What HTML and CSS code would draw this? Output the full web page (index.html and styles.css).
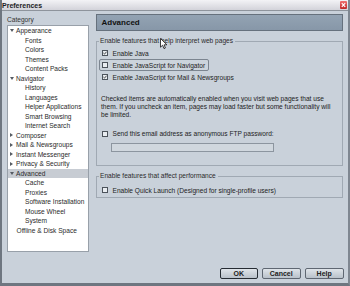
FILE: index.html
```html
<!DOCTYPE html>
<html>
<head>
<meta charset="utf-8">
<link rel="stylesheet" href="styles.css">
</head>
<body>
<div class="window">
  <div class="titlebar">
    <span class="title">Preferences</span>
    <span class="close"><svg width="7" height="8" viewBox="0 0 7 8"><path d="M1.8 2.2 L5.2 5.8 M5.2 2.2 L1.8 5.8" stroke="#fff" stroke-width="1.2" fill="none"/></svg></span>
  </div>
  <div class="main">
    <div class="sidebar">
      <div class="cat-label">Category</div>
      <ul class="tree">
        <li class="node"><span class="twisty open"></span>Appearance</li>
        <li class="child">Fonts</li>
        <li class="child">Colors</li>
        <li class="child">Themes</li>
        <li class="child">Content Packs</li>
        <li class="node"><span class="twisty open"></span>Navigator</li>
        <li class="child">History</li>
        <li class="child">Languages</li>
        <li class="child">Helper Applications</li>
        <li class="child">Smart Browsing</li>
        <li class="child">Internet Search</li>
        <li class="node"><span class="twisty closed"></span>Composer</li>
        <li class="node"><span class="twisty closed"></span>Mail &amp; Newsgroups</li>
        <li class="node"><span class="twisty closed"></span>Instant Messenger</li>
        <li class="node"><span class="twisty closed"></span>Privacy &amp; Security</li>
        <li class="node selected"><span class="twisty open"></span>Advanced</li>
        <li class="child">Cache</li>
        <li class="child">Proxies</li>
        <li class="child">Software Installation</li>
        <li class="child">Mouse Wheel</li>
        <li class="child">System</li>
        <li class="leaf">Offline &amp; Disk Space</li>
      </ul>
    </div>
    <div class="content">
      <div class="panel-header">Advanced</div>
      <fieldset class="group">
        <legend>Enable features that help interpret web pages</legend>
        <div class="row"><span class="check"><span class="box"><svg width="4" height="4" viewBox="0 0 4 4"><path d="M0.4 2 L1.5 3.1 L3.6 0.7" stroke="#333" stroke-width="0.9" fill="none"/></svg></span>Enable Java</span></div>
        <div class="row"><span class="check focused"><span class="box"></span>Enable JavaScript for Navigator</span></div>
        <div class="row"><span class="check"><span class="box"><svg width="4" height="4" viewBox="0 0 4 4"><path d="M0.4 2 L1.5 3.1 L3.6 0.7" stroke="#333" stroke-width="0.9" fill="none"/></svg></span>Enable JavaScript for Mail &amp; Newsgroups</span></div>
        <p class="note">Checked items are automatically enabled when you visit web pages that use them. If you uncheck an item, pages may load faster but some functionality will be limited.</p>
        <div class="row ftp"><span class="check"><span class="box"></span>Send this email address as anonymous FTP password:</span></div>
        <div class="textbox"></div>
      </fieldset>
      <fieldset class="group group2">
        <legend>Enable features that affect performance</legend>
        <div class="row"><span class="check"><span class="box"></span>Enable Quick Launch (Designed for single-profile users)</span></div>
      </fieldset>
    </div>
  </div>
  <div class="footer">
    <button class="btn default">OK</button>
    <button class="btn">Cancel</button>
    <button class="btn">Help</button>
  </div>
  <svg class="cursor" width="8" height="12" viewBox="0 0 8 12"><path d="M0.5 0.5 L0.5 9.2 L2.6 7.2 L4 10.6 L5.4 10 L4.1 6.8 L6.9 6.8 Z" fill="#fff" stroke="#111" stroke-width="0.8"/></svg>
</div>
</body>
</html>
```

FILE: styles.css
```css
* { box-sizing: border-box; }
html, body { margin: 0; padding: 0; }
body {
  width: 350px;
  height: 286px;
  overflow: hidden;
  font-family: "Liberation Sans", Arial, sans-serif;
  font-size: 6.6px;
  color: #222;
  background: #c9d1da;
}
.window {
  position: relative;
  height: 286px;
  display: flex;
  flex-direction: column;
  background: #c9d1da;
  border-left: 2px solid #6e7680;
  border-right: 2px solid #7f8791;
  border-bottom: 3px solid #6e7680;
}
.titlebar {
  height: 11px;
  flex: none;
  display: flex;
  align-items: center;
  justify-content: space-between;
  padding: 0 1px 0 0;
  background: linear-gradient(#f3f3f6, #d3d3da);
  border-bottom: 1px solid #8e949c;
}
.title {
  font-weight: bold;
  font-size: 7px;
  color: #1c1c24;
}
.close {
  width: 7px;
  height: 8px;
  display: flex;
  background: linear-gradient(#f07070, #c02828);
  border-radius: 1px;
}
.main {
  flex: 1;
  display: flex;
  gap: 7px;
  padding: 3px 5px 11.7px 5px;
  min-height: 0;
}
.sidebar {
  width: 82px;
  display: flex;
  flex-direction: column;
}
.cat-label {
  height: 11px;
  line-height: 11px;
  color: #333;
}
.tree {
  flex: 1;
  margin: 0;
  padding: 0;
  list-style: none;
  background: #fff;
  border: 1px solid #98a0a9;
  color: #2a2a2a;
}
.tree li {
  height: 9.5px;
  line-height: 9.5px;
  white-space: nowrap;
  display: flex;
  align-items: center;
}
.node { padding-left: 1.5px; }
.child { padding-left: 17px; }
.leaf { padding-left: 8.5px; }
.selected { background: #c7ccd3; }
.twisty {
  width: 4px;
  height: 4px;
  margin-right: 2.5px;
  display: flex;
  align-items: center;
  justify-content: center;
}
.twisty.open::before {
  content: "";
  width: 0;
  height: 0;
  border-left: 2px solid transparent;
  border-right: 2px solid transparent;
  border-top: 3px solid #555b63;
}
.twisty.closed::before {
  content: "";
  width: 0;
  height: 0;
  border-top: 2px solid transparent;
  border-bottom: 2px solid transparent;
  border-left: 3px solid #555b63;
}
.content {
  flex: 1;
  display: flex;
  flex-direction: column;
}
.panel-header {
  height: 17px;
  line-height: 15px;
  padding-left: 4.5px;
  background: linear-gradient(#93a3b3, #8797a8);
  border: 1px solid #66717d;
  font-weight: bold;
  font-size: 8px;
  color: #111;
}
.group {
  margin: 5px 0 0 0;
  padding: 1px 2px 13px 2px;
  border: 1px solid #a0a9b3;
  min-inline-size: 0;
}
.group legend {
  padding: 0 2px 0 1px;
  height: 10px;
  line-height: 10px;
  color: #2a2a2a;
}
.group2 {
  padding: 3px 2px 1px 2px;
}
.row {
  display: flex;
  height: 12px;
}
.check {
  display: inline-flex;
  align-items: center;
  height: 12px;
  padding: 0 2.5px 0 2px;
  border: 1px solid transparent;
  border-radius: 2px;
  white-space: nowrap;
  color: #222;
}
.check.focused {
  border-color: #7c8590;
  background: #ccd4dc;
}
.box {
  width: 6px;
  height: 6px;
  margin-right: 4.5px;
  border: 1px solid #4c535b;
  background: #e9edf1;
  display: flex;
  align-items: center;
  justify-content: center;
  flex: none;
}
.note {
  margin: 12px 0 0 0;
  padding: 0 2px;
  line-height: 7.8px;
  color: #222;
}
.ftp { margin-top: 9.5px; }
.textbox {
  margin: 3px 0 0 11.7px;
  width: 163.6px;
  height: 9.4px;
  border: 1px solid #8c959f;
  background: #d0d7de;
}
.footer {
  flex: none;
  display: flex;
  justify-content: flex-end;
  gap: 4px;
  padding: 4px 4.3px 3.7px 0;
}
.btn {
  height: 11.6px;
  width: 39px;
  padding: 0;
  font-family: "Liberation Sans", Arial, sans-serif;
  font-size: 7px;
  font-weight: bold;
  color: #222;
  background: linear-gradient(#dfe4e9, #b9c1ca);
  border: 1px solid #5f6772;
  border-radius: 2px;
}
.btn.default {
  width: 38px;
  border: 1.6px solid #262c33;
}
.cursor {
  position: absolute;
  left: 158px;
  top: 38px;
}
```
